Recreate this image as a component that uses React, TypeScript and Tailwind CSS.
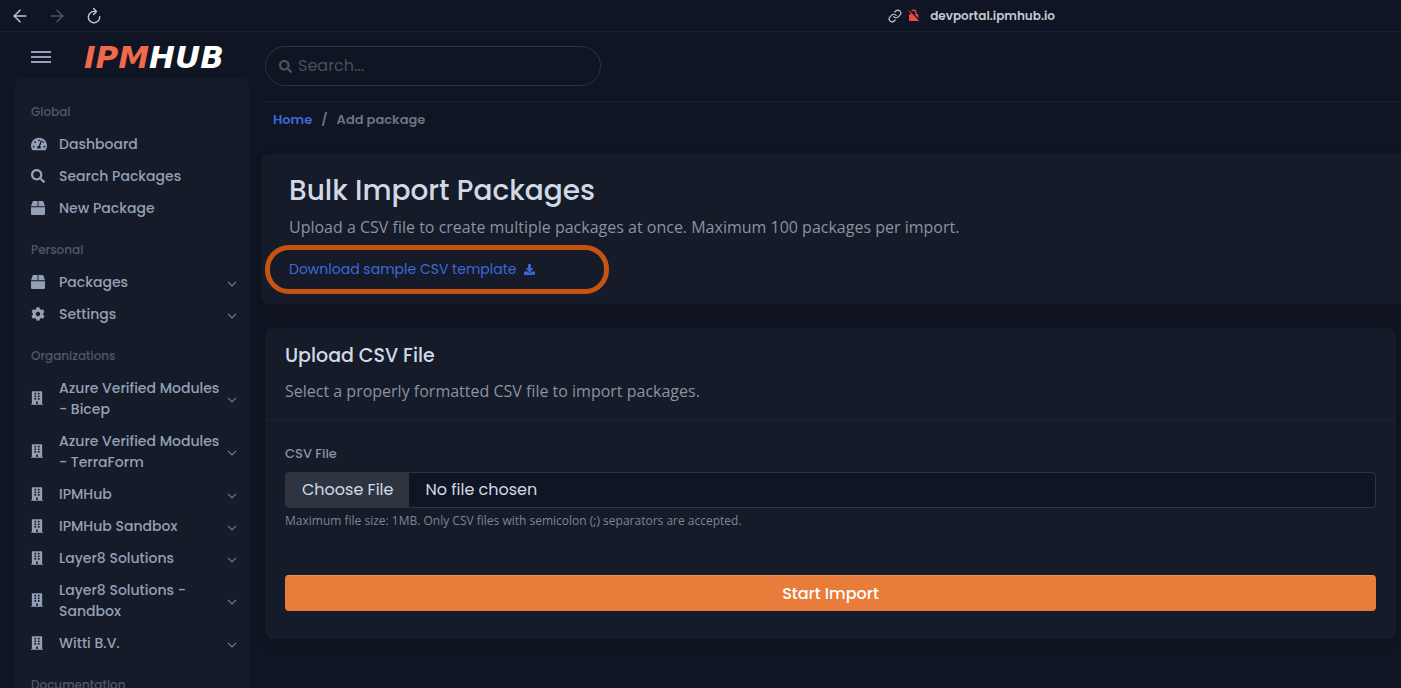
import { useState } from "react";
import type { ReactNode } from "react";
import { ArrowLeft, ArrowRight, Link } from "lucide-react";
import { BsChevronDown } from "react-icons/bs";
import { FaBox, FaBuilding, FaCog, FaDownload, FaSearch, FaTachometerAlt } from "react-icons/fa";

const personal = [
  { label: "Packages", icon: <FaBox /> },
  { label: "Settings", icon: <FaCog /> },
];

const organizations = [
  "Azure Verified Modules - Bicep",
  "Azure Verified Modules - TerraForm",
  "IPMHub",
  "IPMHub Sandbox",
  "Layer8 Solutions",
  "Layer8 Solutions - Sandbox",
  "Witti B.V.",
];

function BrowserBar() {
  return (
    <div className="flex h-8 shrink-0 items-center border-b border-[#1c2330] bg-[#0f1524] text-[#c4c7cd]">
      <div className="flex flex-1 items-center gap-[17px] pl-2.5">
        <button aria-label="Back"><ArrowLeft size={20} strokeWidth={1.8} /></button>
        <button aria-label="Forward" className="text-[#50555f]"><ArrowRight size={20} strokeWidth={1.8} /></button>
        <button aria-label="Reload">
          <svg width="20" height="18" viewBox="-2 0 20 18" fill="none" stroke="currentColor" strokeWidth="1.4">
            <path d="M9.8 4.4H8a5.7 5.7 0 1 0 5.7 5.2" strokeLinecap="round" />
            <path d="M7.6 1.4l2.9 3-2.9 3" strokeLinecap="round" strokeLinejoin="round" />
          </svg>
        </button>
      </div>
      <div className="flex items-center gap-1.5">
        <Link size={14} strokeWidth={2} />
        <svg width="12" height="13" viewBox="0 0 12 13" fill="none">
          <path d="M3.4 6V3.4a2.3 2.3 0 0 1 4.6 0V6" stroke="#ec4a41" strokeWidth="1.3" />
          <rect x="1" y="5.2" width="9.4" height="6.8" rx="1" fill="#ec4a41" />
          <path d="M1.8 1l9.6 10.4" stroke="#0f1524" strokeWidth="1.4" />
          <path d="M.8 1.6l10 10.8" stroke="#ec4a41" strokeWidth="1" />
        </svg>
        <span className="ml-1 text-[12px] font-semibold">devportal.ipmhub.io</span>
      </div>
      <div className="w-[346px]" />
    </div>
  );
}

function NavHeading({ children }: { children: ReactNode }) {
  return <h2 className="px-4 pt-4 pb-[9px] text-[12px] leading-[17px] font-medium text-[#4e586c]">{children}</h2>;
}

function NavItem({ icon, label, expandable = false }: { icon: ReactNode; label: string; expandable?: boolean }) {
  return (
    <a href="#" className="flex items-center pt-[5px] pr-3 pb-[6px] pl-4 text-[14px] leading-[21px] font-medium text-[#94a0b5]">
      <span className="w-7 shrink-0 pb-0.5">{icon}</span>
      <span className="flex-1">{label}</span>
      {expandable && <BsChevronDown size={10} strokeWidth={0.6} className="mt-0.5 shrink-0" />}
    </a>
  );
}

function Sidebar() {
  return (
    <aside className="flex w-[249px] shrink-0 flex-col overflow-y-auto [scrollbar-width:none]">
      <div className="flex h-[46px] shrink-0 items-center gap-[33px] pt-1 pl-[31px]">
        <button aria-label="Toggle menu" className="flex w-5 flex-col gap-[3px]">
          <span className="h-0.5 bg-[#94a0b8]" />
          <span className="h-0.5 bg-[#94a0b8]" />
          <span className="h-0.5 bg-[#94a0b8]" />
        </button>
        <a href="#" className="font-['DejaVu_Sans'] text-[31px] leading-none font-bold text-white italic">
          <span className="text-[#f0694a]">IPM</span>HUB
        </a>
      </div>
      <nav className="ml-[15px] shrink-0 grow rounded-t-lg bg-[#151b28] pt-[9px]">
        <NavHeading>Global</NavHeading>
        <NavItem icon={<FaTachometerAlt size={16} />} label="Dashboard" />
        <NavItem icon={<FaSearch />} label="Search Packages" />
        <NavItem icon={<FaBox />} label="New Package" />
        <NavHeading>Personal</NavHeading>
        {personal.map((item) => (
          <NavItem key={item.label} icon={item.icon} label={item.label} expandable />
        ))}
        <NavHeading>Organizations</NavHeading>
        {organizations.map((name) => (
          <NavItem key={name} icon={<FaBuilding className="w-3" />} label={name} expandable />
        ))}
        <NavHeading>Documentation</NavHeading>
      </nav>
    </aside>
  );
}

export default function App() {
  const [query, setQuery] = useState("");

  return (
    <div className="flex h-screen flex-col overflow-hidden bg-[#0f1522] font-[Poppins,Inter,sans-serif]">
      <BrowserBar />
      <div className="flex min-h-0 flex-1">
        <Sidebar />
        <main className="min-w-0 flex-1 overflow-y-auto pl-3">
          <header className="ml-1 border-b border-[#1a202c] pt-[14px] pb-[15px]">
            <label className="flex h-10 w-[336px] items-center gap-1.5 rounded-full border border-[#2c333f] pl-[13px] text-[#50545f]">
              <FaSearch size={13} />
              <input
                type="search"
                aria-label="Search"
                placeholder="Search..."
                value={query}
                onChange={(e) => setQuery(e.target.value)}
                className="w-64 bg-transparent text-[16px] text-[#d1d9e6] outline-none placeholder:text-[#4a4f5a]"
              />
            </label>
          </header>
          <nav aria-label="Breadcrumb" className="flex gap-[9px] pt-2 pl-3 text-[13px] leading-5 font-semibold text-[#6a7385]">
            <a href="#" className="text-[#3f66dc]">Home</a>
            <span>/</span>
            <span>Add package</span>
          </nav>

          <section className="mt-6 rounded-l-lg bg-[#151b28] px-7 pt-[21px] pb-6 shadow-[0_4px_8px_rgba(18,16,28,0.7)]">
            <h1 className="text-[28px] leading-8 font-medium text-[#d1d9e6]">Bulk Import Packages</h1>
            <p className="mt-2 font-['Open_Sans'] text-[16px] leading-6 text-[#8a92a3]">
              Upload a CSV file to create multiple packages at once. Maximum 100 packages per import.
            </p>
            <div className="relative mt-5 flex pb-px">
              <a href="#" className="flex items-center gap-2 text-[14px] leading-5 text-[#3f66dc]">
                Download sample CSV template
                <FaDownload size={11} />
              </a>
              <div className="pointer-events-none absolute -top-3.5 -left-6 h-[49px] w-[344px] rounded-3xl border-[5px] border-[#c65312]" />
            </div>
          </section>

          <section className="mt-6 mr-[5px] mb-6 ml-1 rounded-lg bg-[#151b28] pb-7 shadow-[0_2px_8px_rgba(18,16,28,0.7)]">
            <div className="border-b border-[#1e2531] px-5 pt-4 pb-4">
              <h2 className="text-[19px] leading-6 font-medium text-[#d1d9e6]">Upload CSV File</h2>
              <p className="mt-[11px] font-['Open_Sans'] text-[16px] leading-6 text-[#8a92a3]">
                Select a properly formatted CSV file to import packages.
              </p>
            </div>
            <form className="px-5 pt-6" onSubmit={(e) => e.preventDefault()}>
              <label htmlFor="csv" className="block text-[13px] leading-5 font-medium text-[#8a92a3]">CSV File</label>
              <input
                id="csv"
                type="file"
                accept=".csv"
                className="mt-2 block h-9 w-full rounded border border-[#2e3541] bg-[#0f1522] text-[16px] leading-[34px] text-[#d1d9e6] file:mr-4 file:h-[34px] file:bg-[#2e3541] file:px-4 file:text-[#d1d9e6]"
              />
              <p className="mt-1 font-['Open_Sans'] text-[12px] leading-[18px] text-[#7d8596]">
                Maximum file size: 1MB. Only CSV files with semicolon (;) separators are accepted.
              </p>
              <button className="mt-[45px] block h-9 w-full rounded-sm border-t border-[#ea9059] bg-[#e77c3b] text-[16px] font-medium text-white">
                Start Import
              </button>
            </form>
          </section>
        </main>
      </div>
    </div>
  );
}
